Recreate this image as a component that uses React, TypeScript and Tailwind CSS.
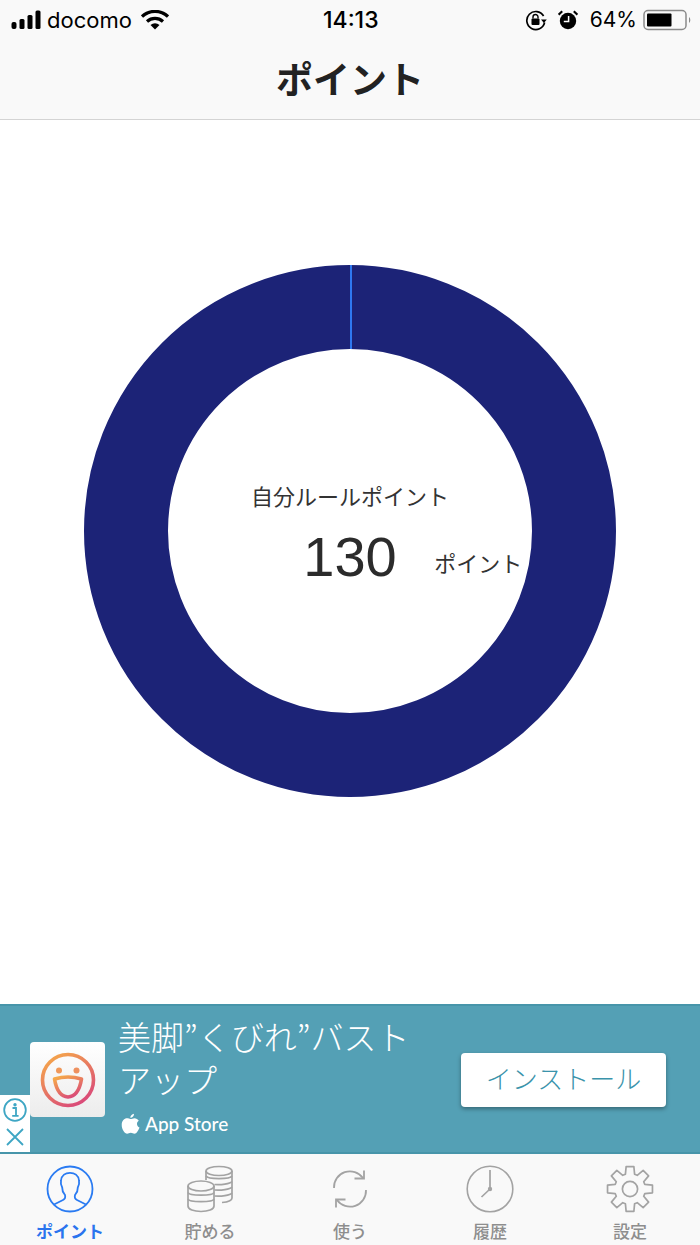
import React from "react";

const JP = "font-['Inter','Noto_Sans_CJK_JP',sans-serif]";

function Signal() {
  return (
    <svg width="32" height="20" viewBox="0 0 32 20" className="block">
      <rect x="0.5" y="12" width="5" height="7" rx="2" fill="#000" />
      <rect x="8.5" y="9" width="5" height="10" rx="1.5" fill="#000" />
      <rect x="16.5" y="5" width="5" height="14" rx="1.5" fill="#000" />
      <rect x="24.5" y="0.5" width="5" height="18.5" rx="1.5" fill="#000" />
    </svg>
  );
}

function Wifi() {
  return (
    <svg width="28" height="20" viewBox="0 0 28 20" className="block">
      <path d="M1 6.5 A19 19 0 0 1 27 6.5" fill="none" stroke="#000" strokeWidth="3.2" />
      <path d="M6 11.5 A12 12 0 0 1 22 11.5" fill="none" stroke="#000" strokeWidth="3.2" />
      <path d="M9.5 15 A7 7 0 0 1 18.5 15 L14 19.5 Z" fill="#000" />
    </svg>
  );
}

function RotationLock() {
  return (
    <svg width="22" height="22" viewBox="0 0 22 22" className="block">
      <path d="M18.6 7 A9 9 0 1 0 19.6 13.5" fill="none" stroke="#000" strokeWidth="1.7" />
      <path d="M16 10.5 L21.8 10.5 L18.9 14 Z" fill="#000" />
      <rect x="6.5" y="9.5" width="8" height="6.5" rx="1" fill="#000" />
      <path d="M8 9.5 V8 A2.5 2.5 0 0 1 13 8 V9.5" fill="none" stroke="#000" strokeWidth="1.4" />
    </svg>
  );
}

function Alarm() {
  return (
    <svg width="20" height="20" viewBox="0 0 20 20" className="block">
      <circle cx="10" cy="11" r="8.2" fill="#000" />
      <path d="M10.6 6 V11.6 H5.8" fill="none" stroke="#fff" strokeWidth="1.5" />
      <path d="M0.6 4.6 L4.2 1.2" stroke="#000" strokeWidth="2.2" />
      <path d="M19.4 4.6 L15.8 1.2" stroke="#000" strokeWidth="2.2" />
    </svg>
  );
}

function Battery() {
  return (
    <svg width="50" height="22" viewBox="0 0 50 22" className="block">
      <rect x="1" y="1.5" width="42" height="19" rx="4" fill="none" stroke="#8a8a8a" strokeWidth="1.5" />
      <rect x="4" y="4.5" width="24.5" height="13" rx="1" fill="#000" />
      <path d="M46 8 A4 4 0 0 1 46 14 Z" fill="#8a8a8a" />
    </svg>
  );
}

function Donut() {
  return (
    <svg width="534" height="534" viewBox="0 0 534 534" className="block">
      <circle cx="267" cy="267" r="224" fill="none" stroke="#1c2377" strokeWidth="84" />
      <rect x="267" y="1" width="2" height="84" fill="#2f78f0" />
    </svg>
  );
}

function AppIcon() {
  return (
    <div className="w-[75px] h-[75px] rounded-[4px] bg-gradient-to-b from-white to-[#ececec] flex items-center justify-center">
      <svg width="56" height="56" viewBox="0 0 56 56" className="block">
        <defs>
          <linearGradient id="smile" x1="0.15" y1="0" x2="0.75" y2="1">
            <stop offset="0" stopColor="#f5a84a" />
            <stop offset="1" stopColor="#d9487a" />
          </linearGradient>
        </defs>
        <circle cx="28" cy="28" r="25.5" fill="none" stroke="url(#smile)" strokeWidth="3.6" />
        <circle cx="19" cy="18.5" r="3" fill="#f0985a" />
        <circle cx="36.5" cy="18.5" r="3" fill="#ee9160" />
        <path d="M14.5 27 Q28 23 41.5 27 C40 36 36 44.5 28 45 C20 44.5 16 36 14.5 27 Z" fill="none" stroke="url(#smile)" strokeWidth="3.6" strokeLinejoin="round" />
      </svg>
    </div>
  );
}

function Apple() {
  return (
    <svg width="19" height="23" viewBox="0 0 18 22" className="block">
      <path d="M12.4 0.6 C12.5 2.6 10.8 4.7 8.8 4.6 C8.6 2.6 10.4 0.8 12.4 0.6 Z" fill="#fff" />
      <path d="M9 5.8 C10 5.8 11.2 5 12.8 5 C14.4 5 16 5.9 16.9 7.3 C14.3 8.9 14.9 12.7 17.6 13.8 C16.8 16.2 14.8 19.8 12.8 19.8 C11.5 19.8 10.8 19 9.3 19 C7.8 19 7 19.8 5.8 19.8 C3.6 19.8 0.6 15.6 0.6 11.4 C0.6 7.4 3.2 5.1 5.6 5.1 C7 5.1 8 5.8 9 5.8 Z" fill="#fff" />
    </svg>
  );
}

function InfoClose() {
  return (
    <div className="absolute left-0 bottom-0 w-[30px] h-[57px] bg-white flex flex-col items-center pt-[2px]">
      <svg width="26" height="26" viewBox="0 0 26 26" className="block">
        <circle cx="13" cy="13" r="10.8" fill="none" stroke="#3ea6c4" strokeWidth="1.8" />
        <circle cx="13" cy="7.8" r="1.7" fill="#3ea6c4" />
        <path d="M10.5 11 H14 V18.5 M10.2 18.8 H16.6" fill="none" stroke="#3ea6c4" strokeWidth="1.8" />
      </svg>
      <svg width="20" height="20" viewBox="0 0 20 20" className="block mt-[4px]">
        <path d="M2 2 L18 18 M18 2 L2 18" stroke="#3ea6c4" strokeWidth="1.8" />
      </svg>
    </div>
  );
}

function PersonIcon() {
  return (
    <svg width="48" height="48" viewBox="0 0 48 48" className="block">
      <circle cx="24" cy="24" r="22.5" fill="none" stroke="#2a7bf2" strokeWidth="1.8" />
      <path d="M8 39.5 L17 35 C19 34 19.5 32 19 30 C17 27.5 16 25 16.2 22.5 C14.8 20 14.5 18 15 15.5 C15.5 10.5 19.5 7.8 24 7.8 C28.5 7.8 32.5 10.5 33 15.5 C33.5 18 33.2 20 31.8 22.5 C32 25 31 27.5 29 30 C28.5 32 29 34 31 35 L40 39.5" fill="none" stroke="#2a7bf2" strokeWidth="1.8" />
    </svg>
  );
}

function CoinsIcon() {
  const s = "#a3a3a3";
  return (
    <svg width="48" height="48" viewBox="0 0 48 48" className="block">
      <g fill="none" stroke={s} strokeWidth="1.7">
        <ellipse cx="33" cy="6" rx="13" ry="4.5" />
        <path d="M20 6 V15 M46 6 V33 C46 35.5 42 37 36 37.5" />
        <path d="M20 11 C22 14.5 44 14.5 46 11" />
        <path d="M28.5 19.5 C35 20 44 19 46 16.5" />
        <path d="M28.5 25 C35 25.5 44 24.5 46 22" />
        <path d="M28.5 31 C35 31.5 44 30.5 46 28" />
        <ellipse cx="15" cy="21" rx="13" ry="5" />
        <path d="M2 21 V41 C2 44.5 8 46.5 15 46.5 C22 46.5 28 44.5 28 41 V21" />
        <path d="M2 27.5 C3 31 27 31 28 27.5" />
        <path d="M2 34 C3 37.5 27 37.5 28 34" />
      </g>
    </svg>
  );
}

function SyncIcon() {
  const s = "#a3a3a3";
  return (
    <svg width="36" height="40" viewBox="0 0 36 40" className="block">
      <g fill="none" stroke={s} strokeWidth="1.8">
        <path d="M2 19 A16 16 0 0 1 31 9" />
        <path d="M22.5 9.5 H32 V1.5" />
        <path d="M34 21 A16 16 0 0 1 5 31" />
        <path d="M13.5 30.5 H4 V38.5" />
      </g>
    </svg>
  );
}

function ClockIcon() {
  return (
    <svg width="48" height="48" viewBox="0 0 48 48" className="block">
      <circle cx="24" cy="24" r="22.8" fill="none" stroke="#a3a3a3" strokeWidth="1.6" />
      <path d="M24 5 V24 L15.5 32" fill="none" stroke="#a3a3a3" strokeWidth="1.7" />
      <circle cx="24" cy="24" r="2.2" fill="#a3a3a3" />
    </svg>
  );
}

function GearIcon() {
  const cx = 24;
  const cy = 24;
  const n = 8;
  let d = "";
  for (let i = 0; i < n; i++) {
    const a = (i / n) * Math.PI * 2 - Math.PI / 2;
    const pts: [number, number][] = [
      [-0.3, 15.5],
      [-0.17, 22.8],
      [0.17, 22.8],
      [0.3, 15.5],
    ];
    pts.forEach(([da, r], j) => {
      const x = cx + r * Math.cos(a + da);
      const y = cy + r * Math.sin(a + da);
      d += `${i === 0 && j === 0 ? "M" : "L"}${x.toFixed(2)} ${y.toFixed(2)} `;
    });
  }
  d += "Z";
  return (
    <svg width="48" height="48" viewBox="0 0 48 48" className="block">
      <path d={d} fill="none" stroke="#a3a3a3" strokeWidth="1.7" strokeLinejoin="round" />
      <circle cx="24" cy="24" r="7.6" fill="none" stroke="#a3a3a3" strokeWidth="1.7" />
    </svg>
  );
}

function Tab({ icon, label, active }: { icon: React.ReactNode; label: string; active?: boolean }) {
  return (
    <div className="flex-1 flex flex-col items-center">
      <div className="h-[48px] flex items-center justify-center">{icon}</div>
      <div className={`mt-[6px] text-[17px] leading-[24px] font-['Noto_Sans_CJK_JP',sans-serif] ${active ? "text-[#2a74ee] font-bold" : "text-[#8e8e8e] font-medium"}`}>
        {label}
      </div>
    </div>
  );
}

export default function App() {
  return (
    <div className={`w-[700px] h-[1245px] flex flex-col bg-white overflow-hidden ${JP}`}>
      <header className="h-[120px] shrink-0 bg-[#f9f9f9] border-b border-[#d4d4d4]">
        <div className="h-[39px] relative flex items-center justify-between pl-[11px] pr-[7px]">
          <div className="flex items-center">
            <Signal />
            <span className="ml-[4px] text-[22px] leading-none text-black font-['Inter',sans-serif]">docomo</span>
            <span className="ml-[9px]"><Wifi /></span>
          </div>
          <div className="absolute left-[323px] top-[8px] text-[23px] leading-[24px] font-medium text-black font-['Inter',sans-serif]">14:13</div>
          <div className="flex items-center">
            <RotationLock />
            <span className="ml-[11px]"><Alarm /></span>
            <span className="ml-[12px] text-[21px] leading-none text-black font-['Inter',sans-serif]">64%</span>
            <span className="ml-[6px]"><Battery /></span>
          </div>
        </div>
        <h1 className="text-center text-[37px] leading-[50px] font-bold text-[#222] font-['Noto_Sans_CJK_JP',sans-serif] mt-[14px]">ポイント</h1>
      </header>

      <main className="h-[884px] shrink-0 flex items-center justify-center pb-[62px]">
        <div className="relative">
          <Donut />
          <div className="absolute inset-0 flex flex-col items-center pt-[217px]">
            <div className="text-[22px] leading-[28px] text-[#333] font-['Noto_Sans_CJK_JP',sans-serif]">自分ルールポイント</div>
            <div className="relative mt-[16px]">
              <div className="text-[56px] leading-[64px] text-[#2b2b2b] font-['Liberation_Sans',sans-serif]">130</div>
              <div className="absolute left-[131px] top-[23px] whitespace-nowrap text-[22px] leading-[28px] text-[#333] font-['Noto_Sans_CJK_JP',sans-serif]">ポイント</div>
            </div>
          </div>
        </div>
      </main>

      <section className="relative h-[150px] shrink-0 bg-[#54a0b5] border-y-2 border-[#4795aa] flex items-start">
        <div className="ml-[30px] mt-[36px]"><AppIcon /></div>
        <div className="ml-[13px] w-[310px] mt-[9px] font-['Noto_Sans_CJK_JP',sans-serif]">
          <div className="text-[33px] leading-[43px] font-light text-white">美脚”くびれ”バスト アップ</div>
          <div className="mt-[10px] ml-[3px] flex items-center">
            <Apple />
            <span className="ml-[5px] text-[19px] leading-[26px] font-medium text-white font-['Lato',sans-serif]">App Store</span>
          </div>
        </div>
        <button className="absolute right-[34px] top-[47px] w-[205px] h-[54px] pb-[5px] bg-white rounded-[4px] shadow-[0_2px_4px_rgba(0,0,0,0.35)] text-[#3a93ab] text-[26px] leading-none font-light font-['Noto_Sans_CJK_JP',sans-serif]">インストール</button>
        <InfoClose />
      </section>

      <nav className="h-[91px] shrink-0 bg-[#f9f9f9] flex px-0 pt-[11px]">
        <Tab icon={<PersonIcon />} label="ポイント" active />
        <Tab icon={<CoinsIcon />} label="貯める" />
        <Tab icon={<SyncIcon />} label="使う" />
        <Tab icon={<ClockIcon />} label="履歴" />
        <Tab icon={<GearIcon />} label="設定" />
      </nav>
    </div>
  );
}
